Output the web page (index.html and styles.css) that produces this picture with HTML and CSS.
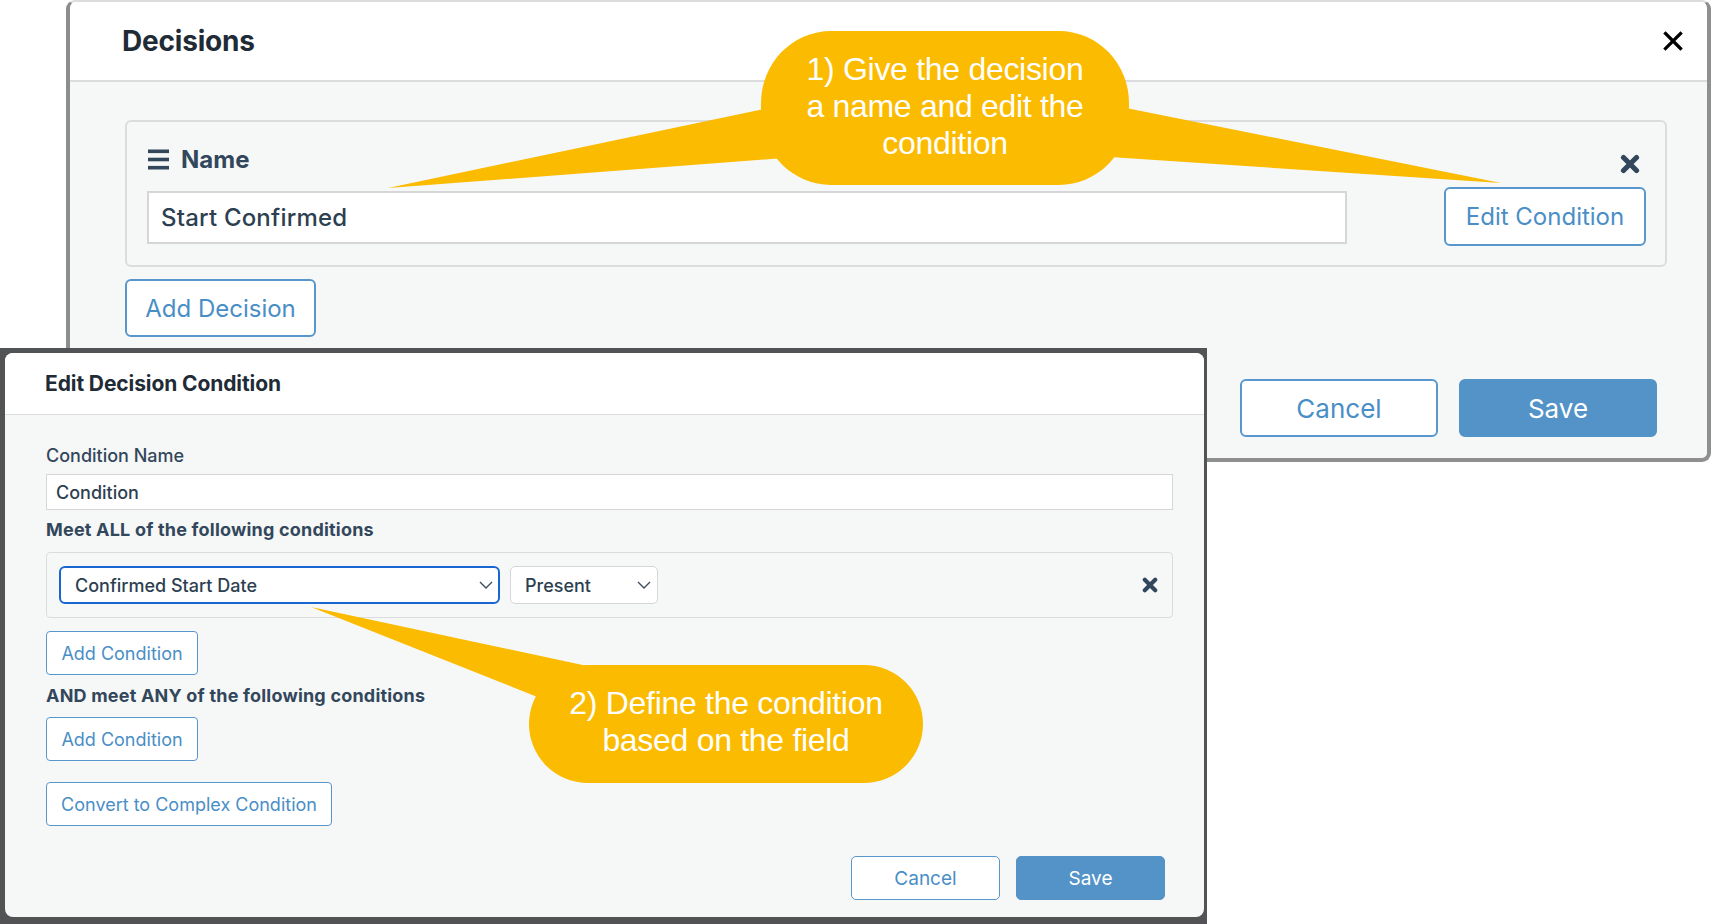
FILE: index.html
```html
<!DOCTYPE html>
<html lang="en">
<head>
<meta charset="utf-8">
<title>Decisions</title>
<link rel="stylesheet" href="styles.css">
</head>
<body>
<div class="stage">

  <section class="win win-decisions">
    <header class="win-head">
      <h1 class="win-title">Decisions</h1>
      <button class="close-btn" aria-label="Close">
        <svg viewBox="0 0 20 20" width="20" height="20"><path d="M2.5 2.5L17.5 17.5M17.5 2.5L2.5 17.5" stroke="#000" stroke-width="3.2" stroke-linecap="square"/></svg>
      </button>
    </header>
    <div class="win-body">
      <div class="decision-card">
        <div class="dc-main">
          <div class="dc-label">
            <svg class="ham" viewBox="0 0 21 21" width="21" height="21"><rect x="0" y="0.5" width="21" height="3.6" fill="currentColor"/><rect x="0" y="8.7" width="21" height="3.6" fill="currentColor"/><rect x="0" y="16.9" width="21" height="3.6" fill="currentColor"/></svg>
            <span>Name</span>
          </div>
          <div class="text-input big">Start Confirmed</div>
        </div>
        <div class="dc-side">
          <svg class="xbold" viewBox="0 0 20 20" width="20" height="20"><path d="M3.5 3.5L16.5 16.5M16.5 3.5L3.5 16.5" stroke="currentColor" stroke-width="5.2" stroke-linecap="round"/></svg>
          <button class="btn btn-lg btn-outline edit-cond">Edit Condition</button>
        </div>
      </div>
      <button class="btn btn-lg btn-outline add-decision">Add Decision</button>
      <div class="win-foot">
        <button class="btn btn-xl btn-outline">Cancel</button>
        <button class="btn btn-xl btn-primary">Save</button>
      </div>
    </div>
  </section>

  <section class="frame">
    <div class="win win-cond">
      <header class="cond-head">
        <h2 class="cond-title">Edit Decision Condition</h2>
      </header>
      <div class="cond-body">
        <div class="field-label">Condition Name</div>
        <div class="text-input small">Condition</div>
        <div class="section-label">Meet ALL of the following conditions</div>
        <div class="cond-row">
          <div class="select focused">
            <span>Confirmed Start Date</span>
            <svg viewBox="0 0 14 8" width="14" height="8"><path d="M1 1L7 7L13 1" fill="none" stroke="#3c4e60" stroke-width="1.4"/></svg>
          </div>
          <div class="select plain">
            <span>Present</span>
            <svg viewBox="0 0 14 8" width="14" height="8"><path d="M1 1L7 7L13 1" fill="none" stroke="#3c4e60" stroke-width="1.4"/></svg>
          </div>
          <svg class="xbold small-x" viewBox="0 0 20 20" width="16" height="16"><path d="M3.5 3.5L16.5 16.5M16.5 3.5L3.5 16.5" stroke="currentColor" stroke-width="5.2" stroke-linecap="round"/></svg>
        </div>
        <button class="btn btn-sm btn-outline add-c1">Add Condition</button>
        <div class="section-label any">AND meet ANY of the following conditions</div>
        <button class="btn btn-sm btn-outline add-c2">Add Condition</button>
        <button class="btn btn-sm btn-outline convert">Convert to Complex Condition</button>
        <div class="cond-foot">
          <button class="btn btn-md btn-outline">Cancel</button>
          <button class="btn btn-md btn-primary">Save</button>
        </div>
      </div>
    </div>
  </section>

  <svg class="callouts" viewBox="0 0 1714 924" width="1714" height="924">
    <polygon points="764,109 388,188 784,158" fill="#fbbb00"/>
    <polygon points="1126,108 1501,183 1110,157" fill="#fbbb00"/>
    <rect x="761" y="31" width="368" height="154" rx="70" ry="72" fill="#fbbb00"/>
    <polygon points="311,607 606,670 545,700" fill="#fbbb00"/>
    <rect x="529" y="665" width="394" height="118" rx="59" ry="59" fill="#fbbb00"/>
  </svg>
  <div class="bubble-text b1">1) Give the decision<br>a name and edit the<br>condition</div>
  <div class="bubble-text b2">2) Define the condition<br>based on the field</div>

</div>
</body>
</html>
```

FILE: styles.css
```css
* { box-sizing: border-box; }
html, body { margin: 0; padding: 0; }
body {
  width: 1714px;
  height: 924px;
  overflow: hidden;
  background: #ffffff;
  font-family: Inter, "Noto Sans", sans-serif;
  color: #32475b;
}
.stage { position: relative; width: 1714px; height: 924px; }

button { font-family: inherit; cursor: pointer; white-space: nowrap; }

/* ---------- Decisions window ---------- */
.win-decisions {
  position: absolute;
  left: 66px;
  top: 0;
  width: 1645px;
  height: 462px;
  display: flex;
  flex-direction: column;
  background: #f6f7f7;
  border-left: 4px solid #8d8d8d;
  border-top: 2px solid #dcdcde;
  border-right: 4px solid #8f8f8f;
  border-bottom: 4px solid #8f8f8f;
  border-radius: 9px;
  overflow: hidden;
}
.win-head {
  height: 80px;
  flex: none;
  background: #fff;
  border-bottom: 2px solid #dcdcde;
  display: flex;
  align-items: center;
  padding: 0 24px 0 52px;
}
.win-title {
  margin: 0;
  flex: 1;
  font-size: 28px;
  font-weight: 700;
  color: #1f2b36;
  letter-spacing: -0.2px;
}
.close-btn {
  border: 0;
  background: none;
  padding: 0;
  width: 20px;
  height: 20px;
  display: flex;
}
.win-body {
  flex: 1;
  padding: 38px 40px 0 55px;
  display: flex;
  flex-direction: column;
  align-items: flex-start;
}
.decision-card {
  width: 100%;
  height: 147px;
  border: 2px solid #dcdcde;
  border-radius: 6px;
  display: flex;
  padding: 0 19px 0 20px;
}
.dc-main {
  width: 1200px;
  padding-top: 24px;
  display: flex;
  flex-direction: column;
}
.dc-label {
  display: flex;
  align-items: center;
  gap: 12px;
  height: 26px;
  font-size: 24px;
  font-weight: 700;
  color: #32475b;
  padding-left: 1px;
}
.ham { color: #32475b; }
.text-input {
  background: #fff;
  color: #2d3f50;
  display: flex;
  align-items: center;
}
.text-input.big {
  margin-top: 19px;
  height: 53px;
  border: 2px solid #d6d6d8;
  padding-left: 12px;
  font-size: 24px;
  font-weight: 500;
  letter-spacing: 0.2px;
}
.dc-side {
  margin-left: auto;
  padding-top: 32px;
  display: flex;
  flex-direction: column;
  align-items: flex-end;
}
.xbold { color: #32475b; display: block; }
.dc-side .xbold { margin-right: 6px; }

.btn {
  background: #fff;
  border-radius: 6px;
  display: flex;
  align-items: center;
  justify-content: center;
  padding: 0;
}
.btn-outline { color: #4a8ec6; border: 2px solid #5897cd; }
.btn-primary { color: #fff; background: #5393c7; border: 2px solid #5393c7; }
.btn-lg { height: 58px; font-size: 24px; font-weight: 400; }
.edit-cond { margin-top: 13px; width: 202px; height: 59px; }
.add-decision { margin-top: 12px; width: 191px; }
.win-foot {
  align-self: flex-end;
  margin-top: 42px;
  margin-right: 10px;
  display: flex;
  gap: 21px;
}
.btn-xl { width: 198px; height: 58px; font-size: 26px; }

/* ---------- Edit condition window ---------- */
.frame {
  position: absolute;
  left: 0;
  top: 348px;
  width: 1207px;
  height: 576px;
  background: #525354;
  padding: 5px 3px 7px 5px;
}
.win-cond {
  width: 1199px;
  height: 564px;
  background: #f6f7f7;
  border-radius: 8px;
  overflow: hidden;
  display: flex;
  flex-direction: column;
}
.cond-head {
  height: 62px;
  flex: none;
  background: #fff;
  border-bottom: 1px solid #dcdcde;
  display: flex;
  align-items: center;
  padding-left: 40px;
  padding-bottom: 1px;
}
.cond-title {
  margin: 0;
  font-size: 21px;
  font-weight: 700;
  color: #1f2b36;
  letter-spacing: -0.1px;
}
.cond-body {
  flex: 1;
  padding: 27px 31px 17px 41px;
  display: flex;
  flex-direction: column;
  align-items: flex-start;
}
.field-label {
  font-size: 18px;
  line-height: 28px;
  font-weight: 500;
  color: #32475b;
}
.text-input.small {
  width: 100%;
  margin-top: 4px;
  height: 36px;
  border: 1px solid #d6d6d8;
  padding-left: 9px;
  font-size: 18px;
  font-weight: 500;
}
.section-label {
  margin-top: 6px;
  font-size: 18px;
  line-height: 28px;
  font-weight: 700;
  color: #32475b;
  letter-spacing: 0.2px;
}
.section-label.any { margin-top: 7px; }
.cond-row {
  margin-top: 8px;
  width: 100%;
  height: 66px;
  border: 1px solid #dcdcde;
  border-radius: 4px;
  display: flex;
  align-items: center;
  padding: 0 14px 0 12px;
  gap: 10px;
}
.select {
  height: 38px;
  background: #fff;
  display: flex;
  align-items: center;
  justify-content: space-between;
  font-size: 18px;
  font-weight: 500;
  color: #2d3f50;
}
.select.focused {
  width: 441px;
  border: 2px solid #1966d2;
  border-radius: 6px;
  padding: 0 5px 0 14px;
}
.select.plain {
  width: 148px;
  border: 1px solid #d6d6d8;
  border-radius: 5px;
  padding: 0 6px 0 14px;
}
.small-x { margin-left: auto; }
.btn-sm {
  height: 44px;
  font-size: 18px;
  border-width: 1px;
  border-radius: 4px;
  padding: 0;
}
.add-c1 { margin-top: 13px; width: 152px; }
.add-c2 { margin-top: 7px; width: 152px; }
.convert { margin-top: 21px; width: 286px; }
.cond-foot {
  margin-top: auto;
  align-self: flex-end;
  display: flex;
  gap: 16px;
  margin-right: 8px;
}
.btn-md {
  width: 149px;
  height: 44px;
  font-size: 19px;
  border-width: 1px;
  border-radius: 5px;
}

/* ---------- Callouts ---------- */
.callouts {
  position: absolute;
  left: 0;
  top: 0;
  pointer-events: none;
}
.bubble-text {
  position: absolute;
  display: flex;
  align-items: center;
  justify-content: center;
  text-align: center;
  font-family: "Liberation Sans", Arial, sans-serif;
  font-size: 32px;
  line-height: 37px;
  color: #fff;
  letter-spacing: -0.3px;
}
.b1 { left: 761px; top: 31px; width: 368px; height: 154px; padding-bottom: 3px; }
.b2 { left: 529px; top: 665px; width: 394px; height: 118px; padding-bottom: 4px; }
```
